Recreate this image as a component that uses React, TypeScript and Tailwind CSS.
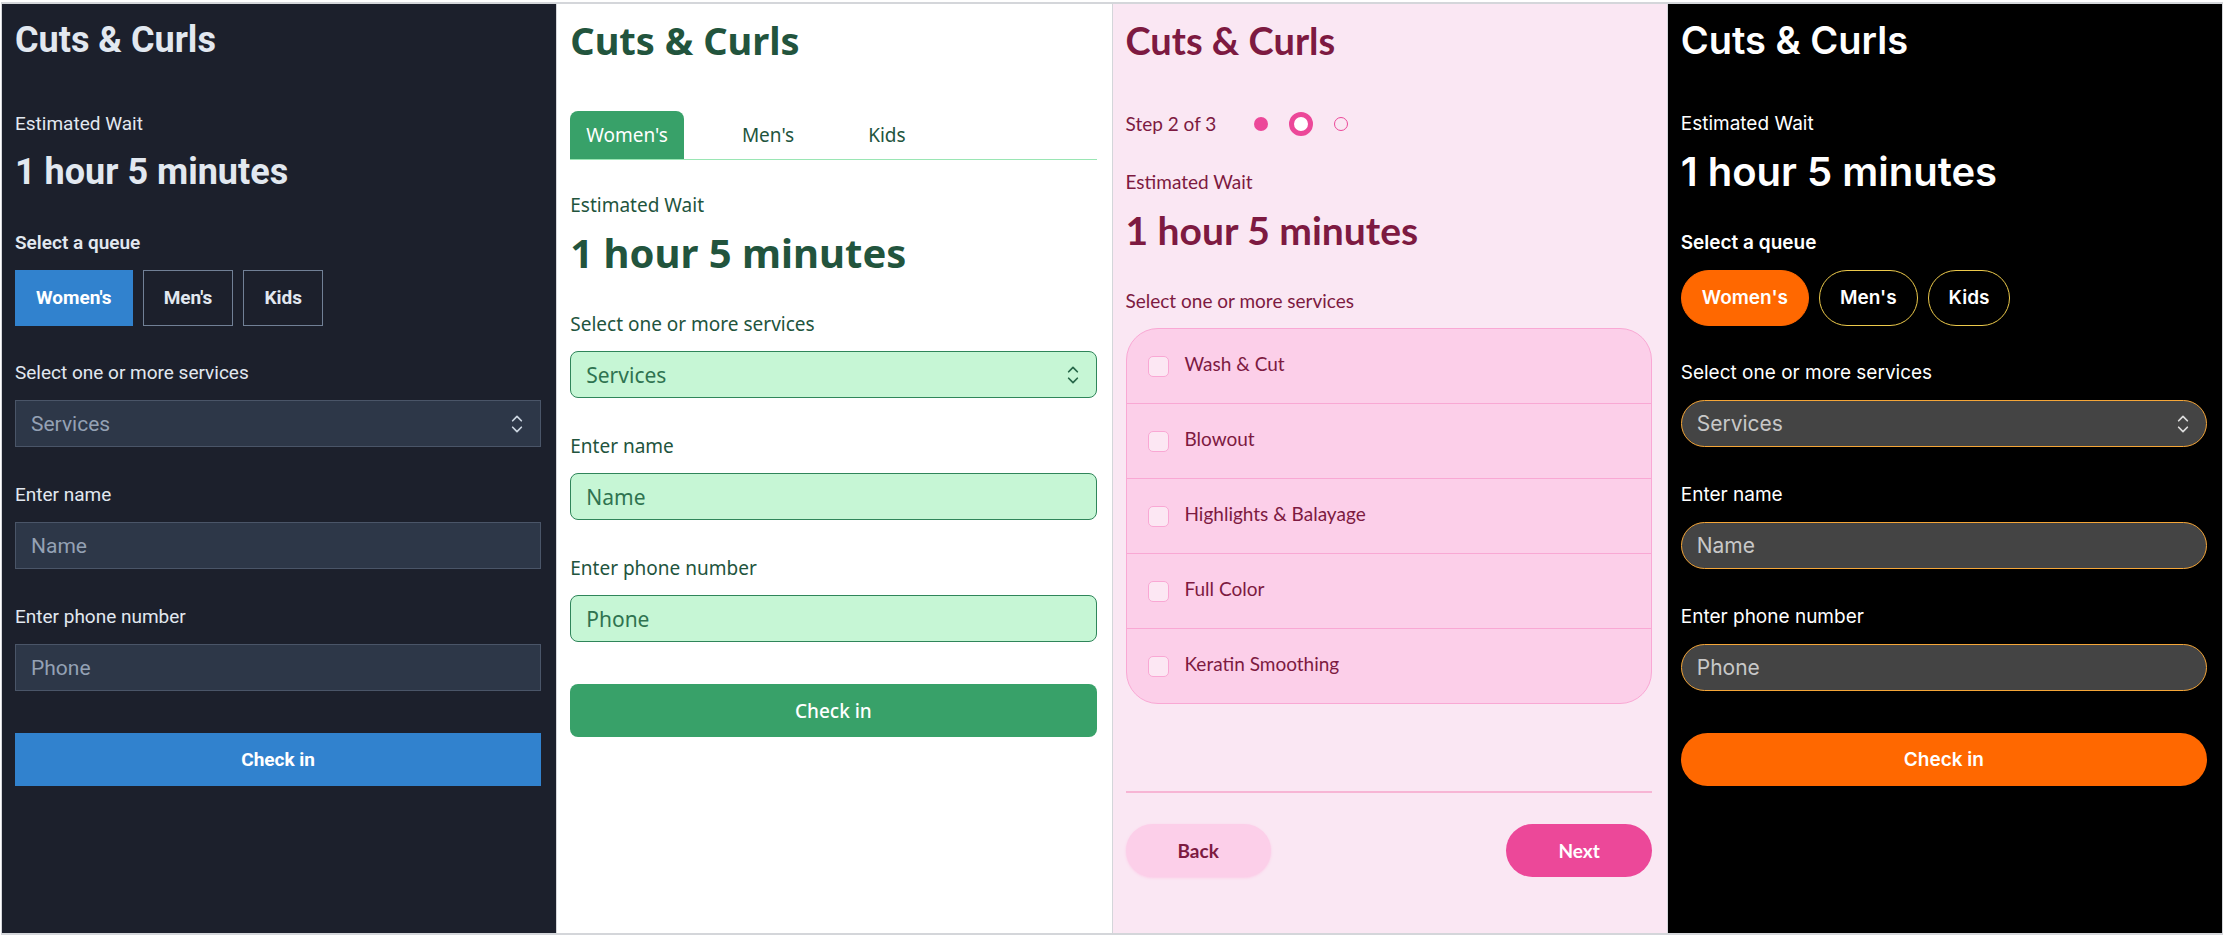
import type { ReactNode } from "react";
import clsx from "clsx";

type Theme = {
  id: string;
  panel: string;
  heading: string;
  wait: string;
  label: string;
  field: string;
  icon: string;
  submit: string;
};

const midnight: Theme = {
  id: "midnight",
  panel: "bg-[#1c202c] text-[#e2e8f0] font-['Roboto',sans-serif]",
  heading: "text-[36px] font-bold",
  wait: "text-[36px] font-bold",
  label: "font-normal",
  field: "bg-[#2d3748] border-[#4a5568] text-[#94a1b4] placeholder:text-[#94a1b4]",
  icon: "text-[#cbd5e0]",
  submit: "bg-[#3182ce] text-white font-bold",
};

const garden: Theme = {
  id: "garden",
  panel: "bg-white text-[#22543d] font-['Noto_Sans',sans-serif]",
  heading: "text-[38px] font-bold",
  wait: "text-[40px] font-bold",
  label: "font-normal",
  field: "rounded-lg bg-[#c6f6d5] border-[#2f855a] text-[#2f7350] placeholder:text-[#2f7350]",
  icon: "text-[#276749]",
  submit: "rounded-lg bg-[#38a169] text-white font-medium",
};

const blossom: Theme = {
  id: "blossom",
  panel: "bg-[#fae7f3] text-[#7d1a41] font-['Lato',sans-serif]",
  heading: "text-[38px] font-bold",
  wait: "text-[39px] font-bold",
  label: "font-normal",
  field: "",
  icon: "",
  submit: "",
};

const ember: Theme = {
  id: "ember",
  panel: "bg-black text-white font-['Inter',sans-serif]",
  heading: "text-[38px] font-semibold",
  wait: "text-[40px] font-semibold",
  label: "font-normal",
  field: "rounded-full bg-[#444444] border-[#f5a638] text-[#c8c8c8] placeholder:text-[#c8c8c8]",
  icon: "text-[#dddddd]",
  submit: "rounded-full bg-[#ff6800] text-white font-semibold",
};

const queues = ["Women's", "Men's", "Kids"];

const services = [
  "Wash & Cut",
  "Blowout",
  "Highlights & Balayage",
  "Full Color",
  "Keratin Smoothing",
];

function Panel({ theme, children }: { theme: Theme; children: ReactNode }) {
  return (
    <section
      className={clsx(
        "flex min-w-0 flex-col border-l border-[#d4d6da] pt-3 pr-[15px] pb-8 pl-[13px] text-[19px] leading-[26px]",
        theme.panel
      )}
    >
      <h1 className={clsx("mb-[47px] leading-[48px]", theme.heading)}>
        Cuts &amp; Curls
      </h1>
      {children}
    </section>
  );
}

function Wait({ theme }: { theme: Theme }) {
  return (
    <div className="mb-[34px]">
      <p>Estimated Wait</p>
      <p className={clsx("mt-[11px] leading-[48px]", theme.wait)}>
        1 hour 5 minutes
      </p>
    </div>
  );
}

function QueuePicker({
  base,
  active,
  inactive,
}: {
  base: string;
  active: string;
  inactive: string;
}) {
  return (
    <fieldset className="mb-[34px]">
      <legend className="mb-3.5 font-semibold">Select a queue</legend>
      <div className="flex gap-2.5">
        {queues.map((queue, i) => (
          <button
            key={queue}
            type="button"
            aria-pressed={i === 0}
            className={clsx("border px-5 py-3.5", base, i === 0 ? active : inactive)}
          >
            {queue}
          </button>
        ))}
      </div>
    </fieldset>
  );
}

function SelectorIcon({ className }: { className?: string }) {
  return (
    <svg
      viewBox="0 0 24 24"
      fill="none"
      stroke="currentColor"
      strokeWidth="1.6"
      strokeLinecap="round"
      strokeLinejoin="round"
      aria-hidden="true"
      className={className}
    >
      <path d="M8 9l4-4 4 4m0 6l-4 4-4-4" />
    </svg>
  );
}

function CheckInForm({ theme }: { theme: Theme }) {
  const field = clsx(
    "block h-[47px] w-full appearance-none border px-[15px] text-[21px] placeholder:opacity-100",
    theme.field
  );

  return (
    <form className="flex flex-col">
      <label htmlFor={`${theme.id}-services`} className={clsx("mb-3.5", theme.label)}>
        Select one or more services
      </label>
      <div className="relative mb-[35px]">
        <select id={`${theme.id}-services`} className={field} defaultValue="">
          <option value="">Services</option>
          {services.map((service) => (
            <option key={service}>{service}</option>
          ))}
        </select>
        <SelectorIcon
          className={clsx(
            "pointer-events-none absolute inset-y-0 right-[11px] my-auto h-[26px] w-[26px]",
            theme.icon
          )}
        />
      </div>

      <label htmlFor={`${theme.id}-name`} className={clsx("mb-3.5", theme.label)}>
        Enter name
      </label>
      <input
        id={`${theme.id}-name`}
        type="text"
        placeholder="Name"
        className={clsx("mb-[35px]", field)}
      />

      <label htmlFor={`${theme.id}-phone`} className={clsx("mb-3.5", theme.label)}>
        Enter phone number
      </label>
      <input
        id={`${theme.id}-phone`}
        type="tel"
        placeholder="Phone"
        className={clsx("mb-[42px]", field)}
      />

      <button type="button" className={clsx("h-[53px] w-full", theme.submit)}>
        Check in
      </button>
    </form>
  );
}

function Tabs() {
  return (
    <nav className="mb-8 flex gap-[42px] border-b border-[#9ae6b4]">
      {queues.map((queue, i) => (
        <button
          key={queue}
          type="button"
          className={clsx(
            "rounded-t-lg px-4 py-[11px]",
            i === 0 && "bg-[#38a169] text-white"
          )}
        >
          {queue}
        </button>
      ))}
    </nav>
  );
}

function Steps() {
  return (
    <div className="mb-8 flex items-center">
      <p>Step 2 of 3</p>
      <ol className="ml-[38px] flex items-center gap-[21px]">
        <li className="h-3.5 w-3.5 rounded-full bg-[#ec4899]" />
        <li className="h-6 w-6 rounded-full border-[5px] border-[#ec4899] bg-white" />
        <li className="h-3.5 w-3.5 rounded-full border border-[#ec4899]" />
      </ol>
    </div>
  );
}

function ServiceList() {
  return (
    <fieldset>
      <legend className="mb-3.5">Select one or more services</legend>
      <ul className="divide-y divide-[#f9a8d4] rounded-[32px] border border-[#f9a8d4] bg-[#fccfe9]">
        {services.map((service) => (
          <li key={service}>
            <label className="flex gap-4 px-[21px] pt-[22px] pb-[26px]">
              <input
                type="checkbox"
                className="mt-[5px] h-[21px] w-[21px] appearance-none rounded-[5px] border border-[#f9a8d4] bg-[#fce7f3]"
              />
              {service}
            </label>
          </li>
        ))}
      </ul>
    </fieldset>
  );
}

export default function App() {
  return (
    <main className="flex min-h-screen bg-white pt-[2px] pr-[2px] pl-px">
      <div className="grid w-full grid-cols-4 border-y-2 border-r border-[#d4d6da]">
        <Panel theme={midnight}>
          <Wait theme={midnight} />
          <QueuePicker
            base="font-bold"
            active="border-[#3182ce] bg-[#3182ce] text-white"
            inactive="border-[#718096]"
          />
          <CheckInForm theme={midnight} />
        </Panel>

        <Panel theme={garden}>
          <Tabs />
          <Wait theme={garden} />
          <CheckInForm theme={garden} />
        </Panel>

        <Panel theme={blossom}>
          <Steps />
          <Wait theme={blossom} />
          <ServiceList />
          <div className="mt-[87px] flex justify-between border-t-2 border-[#f7b5d4] pt-[31px]">
            <button
              type="button"
              className="h-[53px] rounded-full bg-[#fccfe9] px-[52px] font-bold shadow-sm shadow-pink-200"
            >
              Back
            </button>
            <button
              type="button"
              className="h-[53px] rounded-full bg-[#ec4899] px-[52px] font-bold text-white"
            >
              Next
            </button>
          </div>
        </Panel>

        <Panel theme={ember}>
          <Wait theme={ember} />
          <QueuePicker
            base="rounded-full font-semibold"
            active="border-[#ff6800] bg-[#ff6800] text-white"
            inactive="border-[#ecc94b]"
          />
          <CheckInForm theme={ember} />
        </Panel>
      </div>
    </main>
  );
}
